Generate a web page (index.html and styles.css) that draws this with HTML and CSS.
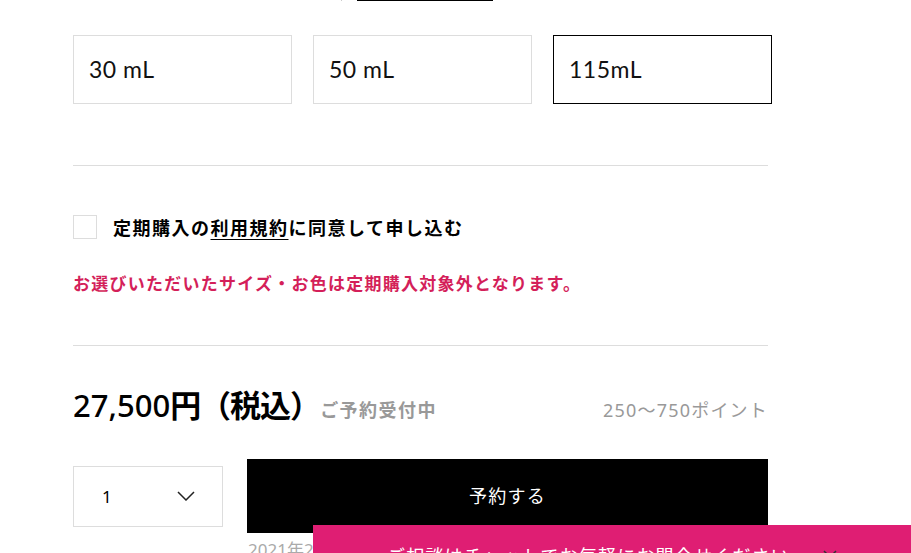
FILE: index.html
```html
<!DOCTYPE html>
<html>
<head>
    <meta charset="utf-8">
    <title>定期購入</title>
    <link rel="stylesheet" href="styles.css">
</head>
<body>
<div id="item">
    <div class="size-head">
        <span class="size-label">容量をお選びください</span>
        <span class="size-sep"></span>
        <a href="#" class="size-guide">サイズガイド</a>
    </div>
    <ul class="size-list">
        <li>30 mL</li>
        <li>50 mL</li>
        <li class="active">115mL</li>
    </ul>

    <div class="regular">
        <label class="agree">
            <span class="check"></span>
            <span>定期購入の<a href="#">利用規約</a>に同意して申し込む</span>
        </label>
        <p class="notice">お選びいただいたサイズ・お色は定期購入対象外となります。</p>
    </div>

    <div class="price-row">
        <span class="price">27,500<b>円（税込）</b></span>
        <span class="status">ご予約受付中</span>
        <span class="point">250〜750ポイント</span>
    </div>

    <div class="buy-row">
        <div class="qty">
            <span>1</span>
            <svg width="18" height="10" viewBox="0 0 18 10"><path d="M1 1 L9 9 L17 1" fill="none" stroke="#222" stroke-width="1.5"/></svg>
        </div>
        <a href="#" class="btn">予約する</a>
    </div>
    <p class="date">2021年2月上旬より順次お届け予定</p>
</div>

<div class="chat-bar">
    <span>ご相談はチャットでお気軽にお問合せください。</span>
    <svg width="14" height="8" viewBox="0 0 14 8"><path d="M1 1 L7 7 L13 1" fill="none" stroke="#333" stroke-width="1.5"/></svg>
</div>
</body>
</html>
```

FILE: styles.css
```css
* {
    margin: 0;
    padding: 0;
    box-sizing: border-box;
}

body {
    font-family: "Noto Sans", "Noto Sans CJK JP", sans-serif;
    color: #000;
    background: #fff;
    overflow: hidden;
}

a {
    color: inherit;
}

#item {
    width: 695px;
    margin-left: 73px;
}

.size-head {
    display: flex;
    align-items: flex-end;
    height: 20px;
    margin-top: -19px;
    font-size: 13px;
    color: #ccc;
}

.size-label {
    width: 268px;
}

.size-sep {
    width: 1px;
    height: 14px;
    background: #ccc;
}

.size-guide {
    width: 136px;
    margin-left: 15px;
    text-decoration: none;
    color: #000;
    border-bottom: 1px solid #000;
    line-height: 19px;
}

.size-list {
    display: flex;
    gap: 21px;
    list-style: none;
    margin-top: 34px;
    width: 699px;
}

.size-list li {
    width: 219px;
    height: 69px;
    border: 1px solid #ddd;
    padding-left: 15px;
    line-height: 67px;
    font-family: "Lato", "Noto Sans CJK JP", sans-serif;
    font-size: 23px;
    letter-spacing: 0.5px;
    color: #111;
}

.size-list li.active {
    border-color: #000;
}

.regular {
    border-top: 1px solid #ddd;
    border-bottom: 1px solid #ddd;
    margin-top: 61px;
    padding: 48px 0 49px;
}

.agree {
    display: flex;
    align-items: center;
    gap: 16px;
    font-size: 18px;
    font-weight: bold;
    letter-spacing: 1.5px;
}

.agree .check {
    width: 24px;
    height: 24px;
    border: 1px solid #ddd;
}

.agree a {
    text-decoration: underline;
    text-underline-offset: 4px;
}

.notice {
    margin-top: 32px;
    font-size: 17px;
    font-weight: bold;
    line-height: 24px;
    letter-spacing: 1.25px;
    color: #d41f5a;
}

.price-row {
    display: flex;
    align-items: baseline;
    margin-top: 38px;
}

.price {
    font-size: 31px;
    font-weight: 500;
    line-height: 42px;
}

.price b {
    letter-spacing: -1px;
}

.status {
    font-size: 18px;
    font-weight: bold;
    letter-spacing: 1.5px;
    color: #999;
}

.point {
    margin-left: auto;
    font-size: 18px;
    letter-spacing: 1.2px;
    color: #999;
}

.buy-row {
    display: flex;
    align-items: center;
    gap: 24px;
    margin-top: 33px;
}

.qty {
    display: flex;
    align-items: center;
    justify-content: space-between;
    width: 150px;
    height: 61px;
    border: 1px solid #ddd;
    padding: 0 27px 0 28px;
    font-size: 17px;
}

.btn {
    flex: 1;
    height: 74px;
    line-height: 74px;
    text-align: center;
    background: #000;
    color: #fff;
    text-decoration: none;
    font-size: 18px;
    letter-spacing: 1.3px;
}

.date {
    margin: 3px 0 0 175px;
    font-size: 17px;
    color: #aaa;
}

.chat-bar {
    position: fixed;
    left: 313px;
    right: 0;
    top: 525px;
    height: 60px;
    background: #df1e73;
    display: flex;
    align-items: flex-start;
    padding: 17px 0 0 74px;
    gap: 14px;
    color: #fff;
    font-size: 18px;
    letter-spacing: 1.2px;
}

.chat-bar svg {
    margin-top: 8px;
}
```
